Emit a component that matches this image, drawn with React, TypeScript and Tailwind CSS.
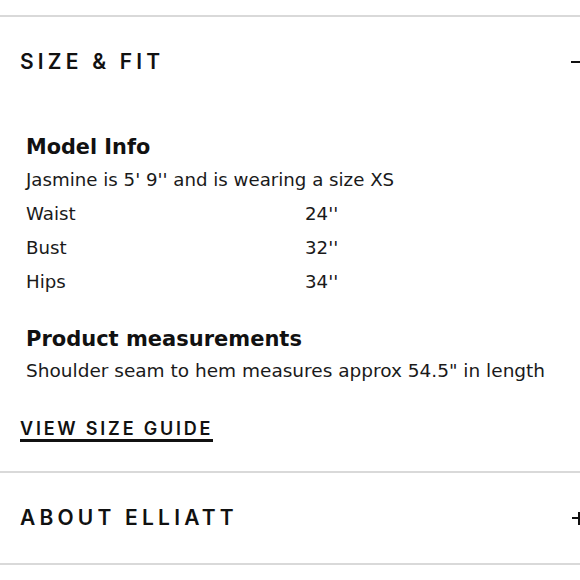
import React from 'react';

const rows = [
  { label: 'Waist', value: "24''" },
  { label: 'Bust', value: "32''" },
  { label: 'Hips', value: "34''" },
];

const headFont = { fontFamily: 'Inter, "DejaVu Sans", sans-serif' };

const App: React.FC = () => {
  return (
    <div
      className="w-[580px] h-[580px] overflow-hidden bg-white text-[#1a1a1a] pt-[15px]"
      style={{ fontFamily: '"DejaVu Sans", sans-serif' }}
    >
      <div className="w-[588px]">
        {/* Size & Fit */}
        <div className="border-t-2 border-[#d9d9d9]">
          <div className="h-[90px] flex items-center justify-between pl-5">
            <h2 className="text-[21px] font-semibold tracking-[0.2em] text-[#111]" style={headFont}>SIZE &amp; FIT</h2>
            <div className="w-[13px] h-[2px] bg-[#111] mr-[4px]" />
          </div>

          <div className="pl-[26px] pt-6">
            <h3 className="text-[20.8px] font-semibold leading-[32px] text-[#111]">Model Info</h3>
            <p className="text-[18.2px] leading-[34px]">Jasmine is 5' 9'' and is wearing a size XS</p>
            {rows.map((r) => (
              <div key={r.label} className="grid grid-cols-[279px_1fr] text-[18.2px] leading-[34px]">
                <span>{r.label}</span>
                <span>{r.value}</span>
              </div>
            ))}

            <h3 className="mt-6 text-[21px] font-semibold leading-[32px] text-[#111]">Product measurements</h3>
            <p className="text-[18.5px] leading-[32px]">Shoulder seam to hem measures approx 54.5" in length</p>
          </div>

          <div className="pl-5 pt-[31px] pb-[29px]">
            <a className="inline-block border-b-[3px] border-[#111] text-[18px] font-semibold leading-[20px] tracking-[0.155em] text-[#111]" style={headFont}>
              VIEW SIZE GUIDE
            </a>
          </div>
        </div>

        {/* About Elliatt */}
        <div className="border-t-2 border-b-2 border-[#d9d9d9]">
          <div className="h-[90px] flex items-center justify-between pl-5">
            <h2 className="text-[21px] font-semibold tracking-[0.2em] text-[#111]" style={headFont}>ABOUT ELLIATT</h2>
            <div className="relative w-[13px] h-[13px] mr-[3px]">
              <div className="absolute left-0 top-[5.5px] w-[13px] h-[2px] bg-[#111]" />
              <div className="absolute top-0 left-[5.5px] w-[2px] h-[13px] bg-[#111]" />
            </div>
          </div>
        </div>
      </div>
    </div>
  );
};

export default App;
